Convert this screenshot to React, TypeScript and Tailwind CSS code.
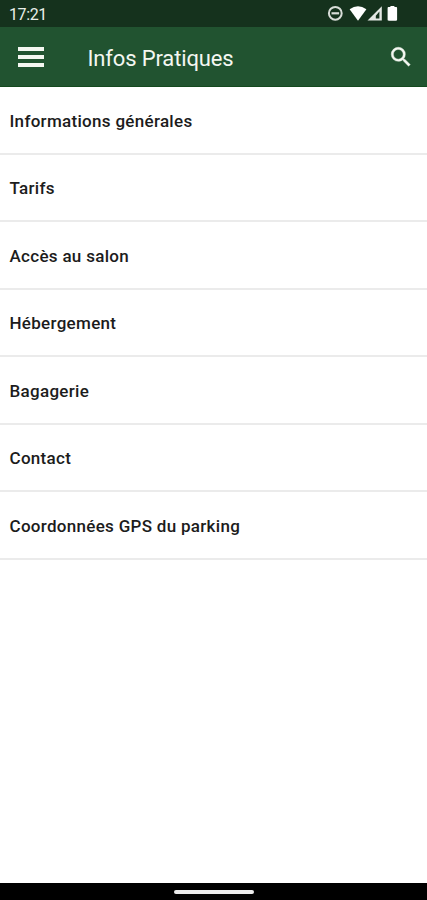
import React from 'react';

const items = [
    'Informations générales',
    'Tarifs',
    'Accès au salon',
    'Hébergement',
    'Bagagerie',
    'Contact',
    'Coordonnées GPS du parking',
];

function StatusBar() {
    return (
        <div className="flex h-[27px] shrink-0 items-center justify-between bg-[#15321d] pl-[9px] pr-[29px] text-[#e9efe9]">
            <span className="pt-[2px] text-[16px] leading-none tracking-[-0.4px]">17:21</span>
            <svg className="h-[27px] w-[72px]" viewBox="0 0 72 27" fill="none">
                <circle cx="9.3" cy="13.3" r="6.4" stroke="#d8ddd8" strokeWidth="2" />
                <path d="M5.5 13.3h7.6" stroke="#d8ddd8" strokeWidth="2.2" />
                <path d="M23.6 9.3Q32 3 40.4 9.3L32 20.7Z" fill="#fff" />
                <path fillRule="evenodd" d="M41.5 20.5L55.8 6.2v14.3ZM49.8 18.5h3.6V11.6l-3.6 4.2Z" fill="#e4e8e4" />
                <path d="M64.4 7.1V6h4v1.1h1.6c.7 0 1.1.4 1.1 1.1v11.3c0 .8-.4 1.2-1.1 1.2h-7.3c-.7 0-1.1-.4-1.1-1.2V8.2c0-.7.4-1.1 1.1-1.1Z" fill="#fff" />
            </svg>
        </div>
    );
}

function Header() {
    return (
        <header className="flex h-[60px] shrink-0 items-center border-b border-[#14491e] bg-[#215330] pl-[18px] pr-[13px] text-[#f4f7f1]">
            <button aria-label="Menu" className="flex w-[26px] flex-col gap-[4px] pt-px">
                <span className="h-[4px] w-full bg-current" />
                <span className="h-[4px] w-full bg-current" />
                <span className="h-[4px] w-full bg-current" />
            </button>
            <h1 className="ml-[43.5px] flex-1 pt-[4px] text-[22px] leading-none tracking-[-0.15px]">Infos Pratiques</h1>
            <button aria-label="Rechercher">
                <svg className="h-[26px] w-[26px]" viewBox="0 0 24 24" fill="currentColor" stroke="currentColor" strokeWidth="0.4">
                    <path d="M15.5 14h-.79l-.28-.27A6.47 6.47 0 0 0 16 9.5 6.5 6.5 0 1 0 9.5 16c1.61 0 3.09-.59 4.23-1.57l.27.28v.79l5 4.99L20.49 19l-4.99-5zm-6 0C7.01 14 5 11.99 5 9.5S7.01 5 9.5 5 14 7.01 14 9.5 11.99 14 9.5 14z" />
                </svg>
            </button>
        </header>
    );
}

export default function App() {
    return (
        <div className="flex h-[900px] w-full flex-col bg-white font-['Roboto',sans-serif]">
            <StatusBar />
            <Header />
            <ul className="flex-1 bg-white">
                {items.map((item) => (
                    <li
                        key={item}
                        className="flex h-[67.5px] items-center border-b-2 border-[#ebebeb] pl-[9.5px] pt-[3px] text-[17px] font-medium tracking-[0.3px] text-[#1c1c1c]"
                    >
                        {item}
                    </li>
                ))}
            </ul>
            <div className="flex h-[17px] shrink-0 items-center justify-center bg-black">
                <div className="h-[4px] w-[80px] rounded-full bg-[#ececec]" />
            </div>
        </div>
    );
}
